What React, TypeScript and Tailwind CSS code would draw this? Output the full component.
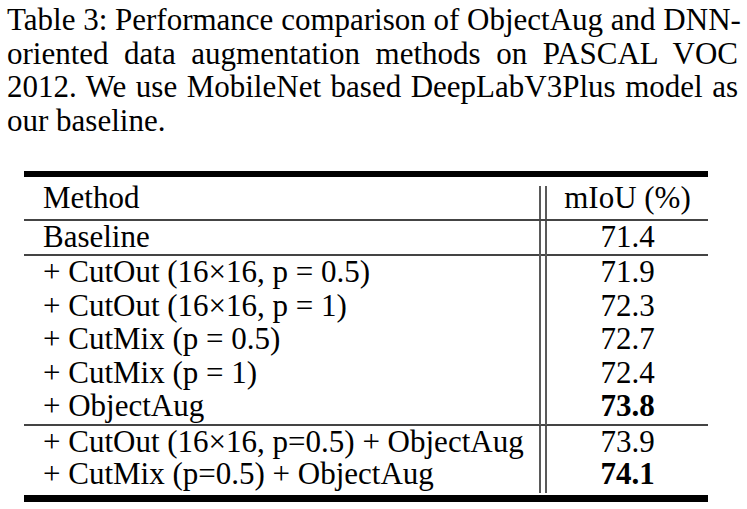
import React from "react";

type Row = { method: string; miou: string; best?: boolean };

const groupA: Row[] = [
  { method: "+ CutOut (16×16, p = 0.5)", miou: "71.9" },
  { method: "+ CutOut (16×16, p = 1)", miou: "72.3" },
  { method: "+ CutMix (p = 0.5)", miou: "72.7" },
  { method: "+ CutMix (p = 1)", miou: "72.4" },
  { method: "+ ObjectAug", miou: "73.8", best: true },
];

const groupB: Row[] = [
  { method: "+ CutOut (16×16, p=0.5) + ObjectAug", miou: "73.9" },
  { method: "+ CutMix (p=0.5) + ObjectAug", miou: "74.1", best: true },
];

const captionLines = [
  "Table 3: Performance comparison of ObjectAug and DNN-",
  "oriented data augmentation methods on PASCAL VOC",
  "2012. We use MobileNet based DeepLabV3Plus model as",
];

const TableRow = ({ row, h = "h-[33.6px]" }: { row: Row; h?: string }) => (
  <div className={`grid grid-cols-[515px_8px_161px] ${h}`}>
    <div className="pl-[19px] pb-[4px] flex items-end whitespace-nowrap">{row.method}</div>
    <div className="border-x-2 border-[#5a5a5a]" />
    <div className={`pb-[4px] flex items-end justify-center ${row.best ? "font-bold" : ""}`}>{row.miou}</div>
  </div>
);

const Rule = () => <div className="h-[2px] bg-[#444]" />;

export default function App() {
  return (
    <div className="w-[747px] h-[509px] bg-white text-black overflow-hidden font-['Liberation_Serif','Times_New_Roman',serif]">
      {/* caption, broken as in the paper */}
      <div className="w-[738px] pl-[7px] pt-[3px] text-[31px] leading-[33.5px]">
        {captionLines.map((l) => (
          <div key={l} className="whitespace-nowrap text-justify [text-align-last:justify]">
            {l}
          </div>
        ))}
        <div>our baseline.</div>
      </div>

      <div className="ml-[24px] mt-[34px] w-[684px] text-[31px] leading-none">
        <div className="h-[6px] bg-black" />
        <div className="grid grid-cols-[515px_8px_161px] h-[42px]">
          <div className="pl-[19px] pb-[6px] flex items-end">Method</div>
          <div className="mt-[9px] border-x-2 border-[#5a5a5a]" />
          <div className="pb-[6px] flex items-end justify-center">mIoU (%)</div>
        </div>
        <Rule />
        <TableRow row={{ method: "Baseline", miou: "71.4" }} h="h-[33px]" />
        <Rule />
        {groupA.map((r) => (
          <TableRow key={r.method} row={r} />
        ))}
        <Rule />
        {groupB.map((r) => (
          <TableRow key={r.method} row={r} h="h-[32.5px]" />
        ))}
        <div className="mt-[4px] h-[7px] bg-black" />
      </div>
    </div>
  );
}
